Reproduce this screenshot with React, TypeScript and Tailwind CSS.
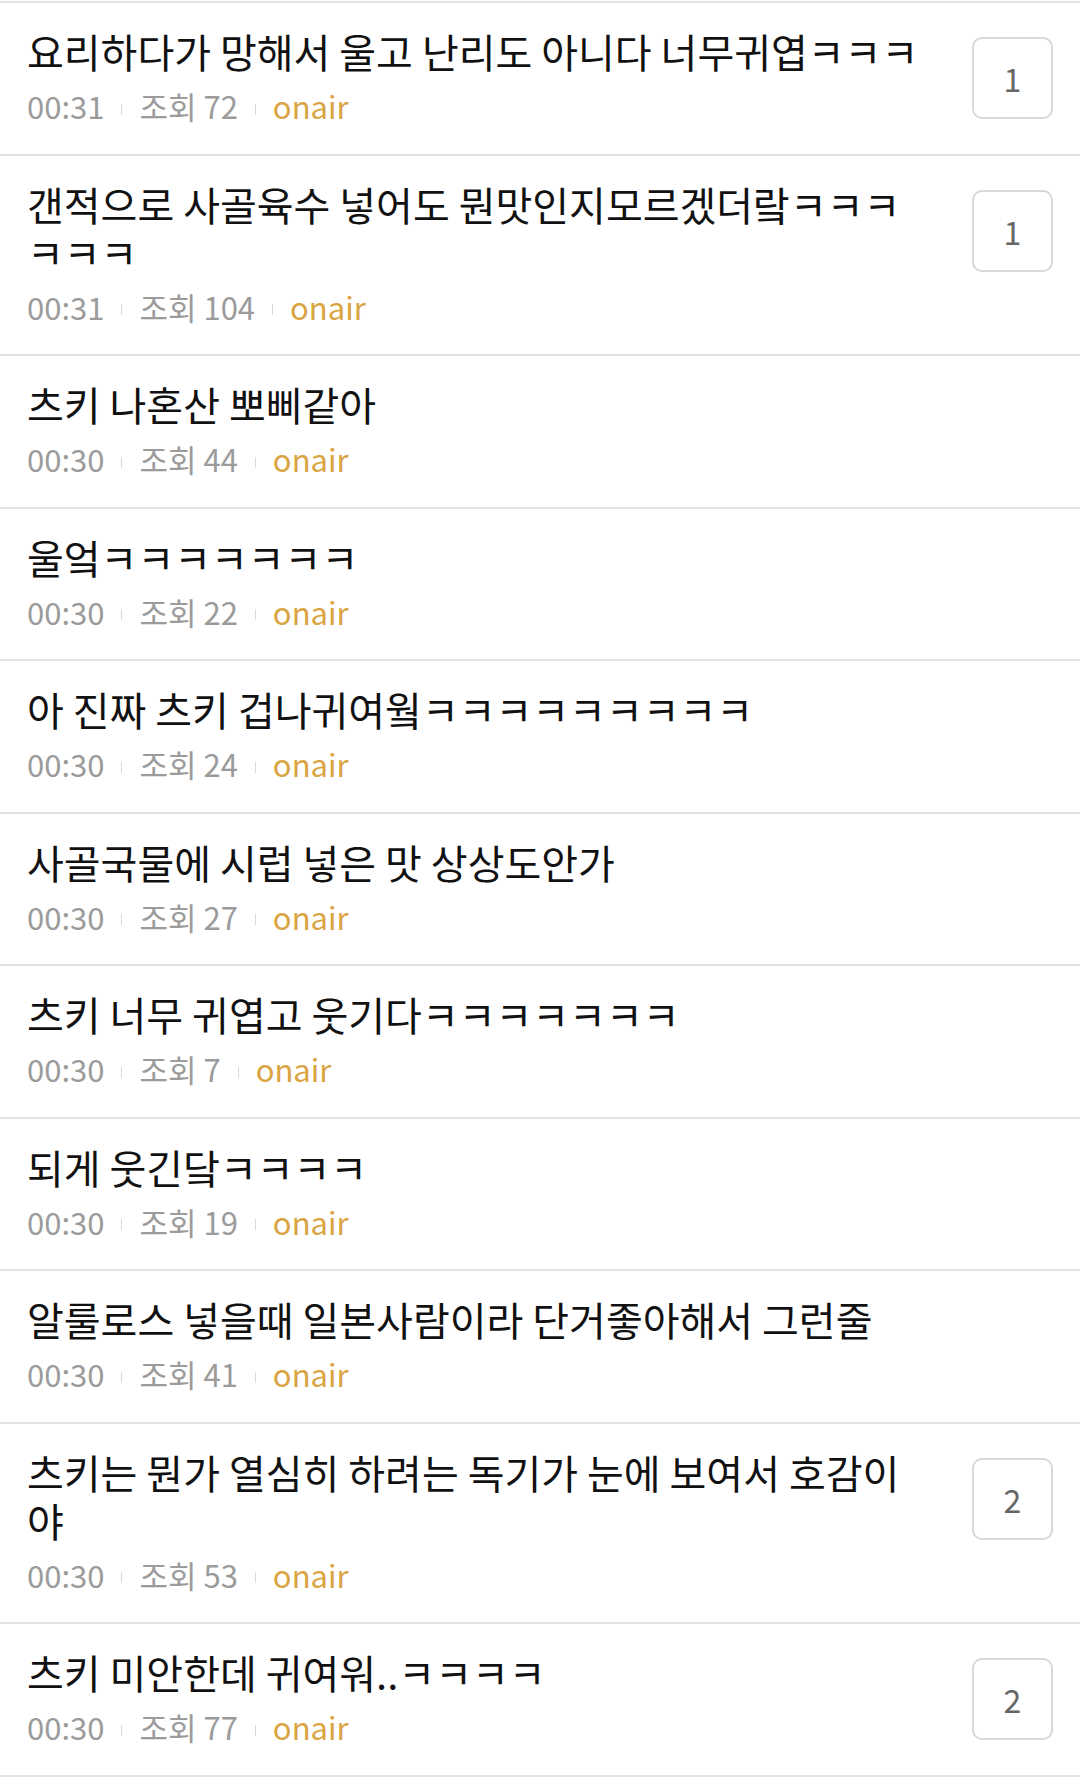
const posts = [
  { title: '요리하다가 망해서 울고 난리도 아니다 너무귀엽ㅋㅋㅋ', time: '00:31', views: 72, comments: 1 },
  { title: '갠적으로 사골육수 넣어도 뭔맛인지모르겠더랔ㅋㅋㅋㅋㅋㅋ', time: '00:31', views: 104, comments: 1 },
  { title: '츠키 나혼산 뽀삐같아', time: '00:30', views: 44 },
  { title: '울엌ㅋㅋㅋㅋㅋㅋㅋ', time: '00:30', views: 22 },
  { title: '아 진짜 츠키 겁나귀여웤ㅋㅋㅋㅋㅋㅋㅋㅋㅋ', time: '00:30', views: 24 },
  { title: '사골국물에 시럽 넣은 맛 상상도안가', time: '00:30', views: 27 },
  { title: '츠키 너무 귀엽고 웃기다ㅋㅋㅋㅋㅋㅋㅋ', time: '00:30', views: 7 },
  { title: '되게 웃긴닼ㅋㅋㅋㅋ', time: '00:30', views: 19 },
  { title: '알룰로스 넣을때 일본사람이라 단거좋아해서 그런줄', time: '00:30', views: 41 },
  { title: '츠키는 뭔가 열심히 하려는 독기가 눈에 보여서 호감이야', time: '00:30', views: 53, comments: 2 },
  { title: '츠키 미안한데 귀여워..ㅋㅋㅋㅋ', time: '00:30', views: 77, comments: 2 },
]

function Sep() {
  return <span className="mx-[17px] mt-[6px] inline-block h-[11px] w-px bg-[#d9d9d9]" />
}

export default function App() {
  return (
    <div
      className="min-h-[1783px] w-[1080px] bg-white pt-px"
      style={{ fontFamily: '"Noto Sans CJK KR", "Noto Sans", sans-serif' }}
    >
      <ul className="border-t-2 border-[#e2e2e2]">
        {posts.map((p, i) => (
          <li key={i} className="flex items-start gap-[48px] border-b-2 border-[#e2e2e2] px-[27px] pt-[24px] pb-[27.5px]">
            <div className="min-w-0 flex-1">
              <p className="text-[40px] leading-[48px] text-[#111] break-all">{p.title}</p>
              <div className="mt-[11px] flex items-center text-[31px] leading-[40px] text-[#9b9b9b]">
                <span>{p.time}</span>
                <Sep />
                <span>조회 {p.views}</span>
                <Sep />
                <span className="text-[#d9a441]">onair</span>
              </div>
            </div>
            {p.comments && (
              <div className="mt-[10px] flex h-[82px] w-[81px] shrink-0 items-center justify-center rounded-[10px] border-2 border-[#d8d8d8] text-[32px] text-[#666]">
                {p.comments}
              </div>
            )}
          </li>
        ))}
      </ul>
    </div>
  )
}
